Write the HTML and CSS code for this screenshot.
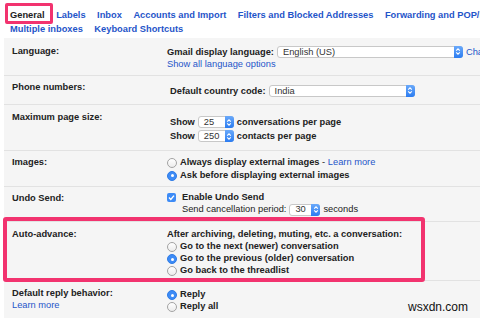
FILE: index.html
```html
<!DOCTYPE html>
<html lang="en">
<head>
    <meta charset="UTF-8">
    <title>Settings - General</title>
    <link rel="stylesheet" href="styles.css">
</head>
<body>
    <div class="tabs">
        <div class="tab-row">
            <span class="tab-current">General</span>
            <a href="#">Labels</a>
            <a href="#">Inbox</a>
            <a href="#">Accounts and Import</a>
            <a href="#">Filters and Blocked Addresses</a>
            <a href="#">Forwarding and POP/IMAP</a>
        </div>
        <div class="tab-row">
            <a href="#">Multiple inboxes</a>
            <a href="#">Keyboard Shortcuts</a>
        </div>
    </div>

    <div class="settings">
        <div class="row row-lang">
            <div class="label label-tall">Language:</div>
            <div class="value">
                <div class="line line-13">
                    <b>Gmail display language:</b>
                    <span class="select select-lang">English (US)<i class="select-arrow"><svg width="6" height="9" viewBox="0 0 6 9"><path d="M1.2 3.6 L3 1.8 L4.8 3.6 M1.2 5.4 L3 7.2 L4.8 5.4" fill="none" stroke="#fff" stroke-width="1.1"/></svg></i></span>
                    <a href="#">Change language settings for other Google products</a>
                </div>
                <div class="line"><a href="#">Show all language options</a></div>
            </div>
        </div>

        <div class="row row-phone">
            <div class="label">Phone numbers:</div>
            <div class="value value-down3">
                <div class="line line-13 indent">
                    <b>Default country code:</b>
                    <span class="select select-country">India<i class="select-arrow"><svg width="6" height="9" viewBox="0 0 6 9"><path d="M1.2 3.6 L3 1.8 L4.8 3.6 M1.2 5.4 L3 7.2 L4.8 5.4" fill="none" stroke="#fff" stroke-width="1.1"/></svg></i></span>
                </div>
            </div>
        </div>

        <div class="row row-page">
            <div class="label">Maximum page size:</div>
            <div class="value value-down4">
                <div class="line line-14 indent">
                    <b>Show</b>
                    <span class="select select-page">25<i class="select-arrow"><svg width="6" height="9" viewBox="0 0 6 9"><path d="M1.2 3.6 L3 1.8 L4.8 3.6 M1.2 5.4 L3 7.2 L4.8 5.4" fill="none" stroke="#fff" stroke-width="1.1"/></svg></i></span>
                    <b>conversations per page</b>
                </div>
                <div class="line line-14 indent">
                    <b>Show</b>
                    <span class="select select-page">250<i class="select-arrow"><svg width="6" height="9" viewBox="0 0 6 9"><path d="M1.2 3.6 L3 1.8 L4.8 3.6 M1.2 5.4 L3 7.2 L4.8 5.4" fill="none" stroke="#fff" stroke-width="1.1"/></svg></i></span>
                    <b>contacts per page</b>
                </div>
            </div>
        </div>

        <div class="row row-images">
            <div class="label">Images:</div>
            <div class="value">
                <div class="line line-125">
                    <span class="radio"></span>
                    <span><b>Always display external images</b> - <a href="#">Learn more</a></span>
                </div>
                <div class="line line-125">
                    <span class="radio radio-on"></span>
                    <b>Ask before displaying external images</b>
                </div>
            </div>
        </div>

        <div class="row row-undo">
            <div class="label">Undo Send:</div>
            <div class="value">
                <div class="line line-11 check-line">
                    <span class="check"><svg width="9" height="9" viewBox="0 0 9 9"><path d="M2 4.6 L3.8 6.4 L7 2.6" fill="none" stroke="#fff" stroke-width="1.4"/></svg></span>
                    <b>Enable Undo Send</b>
                </div>
                <div class="line line-13 sub">
                    <span>Send cancellation period:</span>
                    <span class="select select-period">30<i class="select-arrow"><svg width="6" height="9" viewBox="0 0 6 9"><path d="M1.2 3.6 L3 1.8 L4.8 3.6 M1.2 5.4 L3 7.2 L4.8 5.4" fill="none" stroke="#fff" stroke-width="1.1"/></svg></i></span>
                    <span>seconds</span>
                </div>
            </div>
        </div>

        <div class="row row-auto highlight">
            <div class="label">Auto-advance:</div>
            <div class="value">
                <div class="line"><b>After archiving, deleting, muting, etc. a conversation:</b></div>
                <div class="line"><span class="radio"></span><b>Go to the next (newer) conversation</b></div>
                <div class="line"><span class="radio radio-on"></span><b>Go to the previous (older) conversation</b></div>
                <div class="line"><span class="radio"></span><b>Go back to the threadlist</b></div>
            </div>
        </div>

        <div class="row row-reply">
            <div class="label">
                Default reply behavior:<br>
                <a href="#" class="plain">Learn more</a>
            </div>
            <div class="value value-down1">
                <div class="line"><span class="radio radio-on"></span><b>Reply</b></div>
                <div class="line"><span class="radio"></span><b>Reply all</b></div>
            </div>
        </div>
    </div>

    <div class="watermark">wsxdn.com</div>
</body>
</html>
```

FILE: styles.css
```css
body {
    margin: 0;
    width: 480px;
    height: 318px;
    overflow: hidden;
    position: relative;
    font-family: 'Liberation Sans', Arial, sans-serif;
    font-size: 9.3px;
    color: #222;
    background-color: #fff;
}
a {
    color: #1f55c9;
    text-decoration: none;
}
b {
    font-weight: bold;
}

/* tabs */
.tabs {
    padding: 8px 0 2px 10px;
}
.tab-row {
    display: flex;
    gap: 11.5px;
    line-height: 14px;
    white-space: nowrap;
    font-weight: bold;
}
.tab-current {
    position: relative;
    color: #222;
}
.tab-current::after {
    content: '';
    position: absolute;
    left: -5px;
    right: -8px;
    top: -5px;
    bottom: -2px;
    border: 3px solid #f2336f;
    border-radius: 2px;
}

/* settings table */
.settings {
    margin-left: 4px;
    background-color: #f5f5f5;
}
.row {
    display: grid;
    grid-template-columns: 155px 1fr;
    padding: 6px 0 5px 8px;
    border-bottom: 1px solid #e2e2e2;
    line-height: 12px;
}
.row:last-child {
    border-bottom: none;
}
.row-lang { padding-top: 7px; padding-bottom: 5px; }
.row-phone { padding-top: 5px; padding-bottom: 7px; }
.row-page { padding-top: 6px; padding-bottom: 7px; }
.row-images { padding-top: 5px; padding-bottom: 5px; line-height: 12.5px; }
.row-undo { padding-top: 5px; padding-bottom: 5px; line-height: 12.5px; }
.row-auto { padding-top: 6px; padding-bottom: 4px; }
.row-reply { padding-top: 6px; padding-bottom: 8px; }

.label {
    font-weight: bold;
}
.label-tall {
    line-height: 13px;
}
.label .plain {
    font-weight: normal;
}
.value {
    white-space: nowrap;
    min-width: 0;
}
.value-down1 { margin-top: 1px; }
.value-down3 { margin-top: 3px; }
.value-down4 { margin-top: 4px; }

.line {
    display: flex;
    align-items: center;
    gap: 3px;
    height: 12px;
}
.line-11 { height: 11px; }
.line-125 { height: 12.5px; }
.line-13 { height: 13px; }
.line-14 { height: 14px; }
.indent {
    padding-left: 3px;
}
.check-line {
    gap: 6px;
}
.sub {
    padding-left: 15px;
}

/* fake mac style controls */
.select {
    display: inline-flex;
    align-items: center;
    box-sizing: border-box;
    height: 12px;
    padding-left: 5px;
    border: 1px solid #c8c8c8;
    border-radius: 3px;
    background-color: #fff;
    color: #333;
    font-weight: normal;
    flex: none;
}
.select-arrow {
    display: flex;
    align-items: center;
    justify-content: center;
    width: 9px;
    height: 12px;
    margin-left: auto;
    margin-right: -1px;
    border-radius: 0 3px 3px 0;
    background: linear-gradient(#6aa9fa, #2b7cf1);
}
.select-lang { width: 186px; }
.select-country { width: 146px; }
.select-page { width: 36px; }
.select-period { width: 31px; }

.radio {
    box-sizing: border-box;
    width: 10px;
    height: 10px;
    margin-top: 2px;
    border: 1px solid #a3a3a3;
    border-radius: 50%;
    background: linear-gradient(#fff, #ececec);
    flex: none;
    position: relative;
}
.radio-on {
    border-color: #2f7ce6;
    background: #3d8bf6;
}
.radio-on::after {
    content: '';
    position: absolute;
    left: 2.5px;
    top: 2.5px;
    width: 3px;
    height: 3px;
    border-radius: 50%;
    background-color: #fff;
}
.check {
    display: flex;
    width: 9px;
    height: 9px;
    border-radius: 2px;
    background-color: #3d8bf6;
    flex: none;
}

/* highlight boxes drawn over the screenshot */
.highlight {
    position: relative;
}
.highlight::after {
    content: '';
    position: absolute;
    left: -1px;
    top: -5px;
    width: 422px;
    height: 65px;
    box-sizing: border-box;
    border: 4px solid #f2336f;
    border-radius: 3px;
}

.watermark {
    position: absolute;
    right: 12px;
    bottom: 4px;
    font-size: 12px;
    line-height: 14px;
    color: #111;
}
```
